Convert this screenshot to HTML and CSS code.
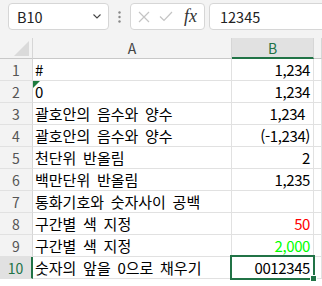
FILE: index.html
```html
<!DOCTYPE html>
<html lang="ko">
<head>
  <meta charset="UTF-8" />
  <meta name="viewport" content="width=device-width, initial-scale=1.0"/>
  <title>서식 예제</title>

  <link rel="stylesheet" href="styles.css">
</head>
<body>
  <div class="toolbar">
    <div class="namebox">
      <span>B10</span>
      <svg class="chev" width="8" height="5" viewBox="0 0 8 5"><path d="M0.5 0.5 L4 4 L7.5 0.5" fill="none" stroke="#444" stroke-width="1.1"/></svg>
    </div>
    <div class="dots">
      <svg width="3" height="12" viewBox="0 0 3 12"><circle cx="1.5" cy="1.5" r="1.2" fill="#888"/><circle cx="1.5" cy="6" r="1.2" fill="#888"/><circle cx="1.5" cy="10.5" r="1.2" fill="#888"/></svg>
    </div>
    <div class="fxbox">
      <svg class="ico" width="12" height="12" viewBox="0 0 12 12"><path d="M1 1 L11 11 M11 1 L1 11" stroke="#c4c4c4" stroke-width="1.2"/></svg>
      <svg class="ico" width="14" height="11" viewBox="0 0 14 11"><path d="M1 5.5 L5 9.5 L13 1" fill="none" stroke="#c4c4c4" stroke-width="1.2"/></svg>
      <span class="fx">fx</span>
    </div>
    <div class="formula">12345</div>
  </div>

  <div class="sheet">
    <div class="hd corner"><span class="tri"></span></div>
    <div class="hd col">A</div>
    <div class="hd col active">B</div>
    <div class="hd col"></div>

    <div class="rn">1</div><div class="c">#</div><div class="c num">1,234</div><div class="c"></div>
    <div class="rn">2</div><div class="c flag">0</div><div class="c num">1,234</div><div class="c"></div>
    <div class="rn">3</div><div class="c">괄호안의 음수와 양수</div><div class="c num pad">1,234</div><div class="c"></div>
    <div class="rn">4</div><div class="c">괄호안의 음수와 양수</div><div class="c num">(-1,234)</div><div class="c"></div>
    <div class="rn">5</div><div class="c">천단위 반올림</div><div class="c num">2</div><div class="c"></div>
    <div class="rn">6</div><div class="c">백만단위 반올림</div><div class="c num">1,235</div><div class="c"></div>
    <div class="rn">7</div><div class="c over">통화기호와 숫자사이 공백</div><div class="c"></div><div class="c"></div>
    <div class="rn">8</div><div class="c">구간별 색 지정</div><div class="c num red">50</div><div class="c"></div>
    <div class="rn">9</div><div class="c">구간별 색 지정</div><div class="c num green">2,000</div><div class="c"></div>
    <div class="rn active">10</div><div class="c">숫자의 앞을 0으로 채우기</div><div class="c num selected">0012345</div><div class="c"></div>
  </div>
</body>
</html>
```

FILE: styles.css
```css
body {
  margin: 0;
  width: 322px;
  height: 286px;
  overflow: hidden;
  background: #fff;
  font-family: "Noto Sans CJK KR", "Noto Sans", sans-serif;
  color: #000;
}

.toolbar {
  display: flex;
  align-items: flex-start;
  height: 38px;
  padding: 3px 0 0 8px;
  box-sizing: border-box;
  background: #f3f3f3;
}

.namebox {
  display: flex;
  align-items: center;
  justify-content: space-between;
  width: 101px;
  height: 27px;
  padding: 0 7px 0 8px;
  box-sizing: border-box;
  background: #fff;
  border: 1px solid #d6d6d6;
  border-radius: 4px;
  font-size: 14.5px;
  color: #222;
}

.dots {
  display: flex;
  justify-content: center;
  align-items: center;
  width: 21px;
  height: 27px;
}

.fxbox {
  display: flex;
  align-items: center;
  width: 75px;
  height: 27px;
  padding-left: 7px;
  box-sizing: border-box;
  background: #fff;
  border: 1px solid #d6d6d6;
  border-radius: 4px;
}

.fxbox .ico {
  margin-right: 9px;
}

.fx {
  font-family: "Liberation Serif", serif;
  font-style: italic;
  font-size: 18px;
  color: #333;
  margin-left: 2px;
}

.formula {
  flex: 1;
  height: 27px;
  margin-left: 4px;
  margin-right: -10px;
  padding-left: 10px;
  box-sizing: border-box;
  background: #fff;
  border: 1px solid #d6d6d6;
  border-radius: 4px;
  font-size: 14.5px;
  line-height: 25px;
  color: #222;
}

.sheet {
  display: grid;
  grid-template-columns: 33px 199px 82px 1fr;
  grid-template-rows: 21px;
  grid-auto-rows: 22px;
}

.sheet > div {
  box-sizing: border-box;
  border-right: 1px solid #e1e1e1;
  border-bottom: 1px solid #e1e1e1;
  white-space: nowrap;
}

.hd {
  background: #f3f3f3;
  font-size: 14px;
  color: #444;
  text-align: center;
  line-height: 20px;
}

.sheet > .hd {
  border-right-color: #d6d6d6;
  border-bottom-color: #c8c8c8;
}

.corner {
  position: relative;
}

.tri {
  position: absolute;
  right: 3px;
  bottom: 2px;
  width: 0;
  height: 0;
  border-left: 15px solid transparent;
  border-bottom: 15px solid #dadada;
}

.sheet > .hd.active {
  background: #e1e1e1;
  color: #217346;
  border-bottom: 2px solid #217346;
}

.sheet > .rn {
  background: #f3f3f3;
  font-size: 14px;
  color: #555;
  text-align: center;
  line-height: 22px;
  border-right-color: #d6d6d6;
}

.sheet > .rn.active {
  background: #e1e1e1;
  color: #217346;
  border-right: 2px solid #217346;
}

.c {
  position: relative;
  padding-left: 2px;
  font-size: 15px;
  word-spacing: 2.5px;
  line-height: 22px;
}

.over {
  overflow: visible;
  z-index: 1;
}

.num {
  text-align: right;
  padding-right: 3px;
  letter-spacing: -0.4px;
}

.num.pad {
  padding-right: 8px;
}

.red {
  color: #ff0000;
}

.green {
  color: #00ff00;
}

.flag::before {
  content: "";
  position: absolute;
  left: 0;
  top: 0;
  border-top: 7px solid #1e7b3e;
  border-right: 7px solid transparent;
}

.selected::after {
  content: "";
  position: absolute;
  left: -2px;
  top: -2px;
  right: -2px;
  bottom: -2px;
  border: 2px solid #217346;
}

.selected::before {
  content: "";
  position: absolute;
  right: -4px;
  bottom: -4px;
  width: 5px;
  height: 5px;
  background: #217346;
  border: 1px solid #fff;
  z-index: 2;
}
```
